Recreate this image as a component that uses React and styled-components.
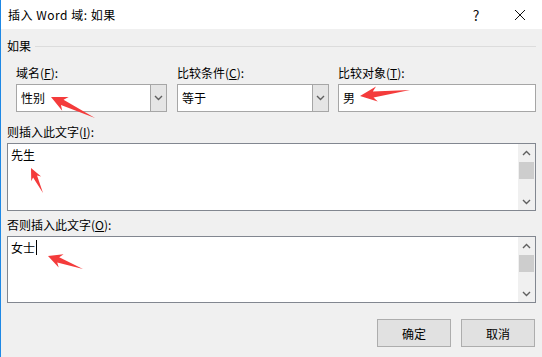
import styled, { createGlobalStyle } from "styled-components";

const GlobalStyle = createGlobalStyle`
  html, body {
    margin: 0;
    padding: 0;
    background: #f0f0f0;
  }
  body {
    font-family: "Noto Sans CJK SC", "Microsoft YaHei", sans-serif;
    font-size: 12px;
    color: #000;
  }
`;

const Window = styled.div`
  position: relative;
  width: 541px;
  height: 357px;
  border-left: 1px solid #1e88e5;
  background: #f0f0f0;
  display: flex;
  flex-direction: column;
  overflow: hidden;
`;

const TitleBar = styled.div`
  height: 29px;
  background: #fff;
  display: flex;
  align-items: center;
  padding-left: 7px;
`;

const Title = styled.div`
  flex: 1;
  font-size: 12px;
  line-height: 16px;
  letter-spacing: 0.5px;
`;

const TitleBtn = styled.div`
  width: 44px;
  height: 29px;
  display: flex;
  align-items: center;
  justify-content: center;
  font-size: 14px;
  color: #111;
`;

const Body = styled.div`
  flex: 1;
  display: flex;
  flex-direction: column;
  padding: 9px 6px 0 6px;
`;

const Section = styled.div`
  display: flex;
  align-items: center;
  line-height: 16px;
  gap: 4px;
`;

const Rule = styled.div`
  flex: 1;
  height: 1px;
  background: #dcdcdc;
`;

const FieldRow = styled.div`
  display: flex;
  padding-left: 9px;
  margin-top: 11px;
`;

const Field = styled.div`
  width: ${(p) => p.$w}px;
  margin-right: ${(p) => p.$gap || 0}px;
  display: flex;
  flex-direction: column;
  gap: 3px;
`;

const Label = styled.div`
  line-height: 16px;
  margin-top: ${(p) => p.$mt || 0}px;
  u {
    text-decoration: underline;
  }
`;

const Box = styled.div`
  height: 28px;
  box-sizing: border-box;
  border: 1px solid #a6a6a6;
  background: #fff;
  display: flex;
  align-items: center;
`;

const BoxText = styled.div`
  flex: 1;
  padding-left: 4px;
  line-height: 16px;
`;

const DropBtn = styled.div`
  width: 15px;
  align-self: stretch;
  background: #e5e5e5;
  border-left: 1px solid #a6a6a6;
  display: flex;
  align-items: center;
  justify-content: center;
`;

const Memo = styled.div`
  height: ${(p) => p.$h}px;
  box-sizing: border-box;
  border: 1px solid #828790;
  background: #fff;
  display: flex;
  margin-top: 3px;
`;

const MemoText = styled.div`
  flex: 1;
  padding: 3px 0 0 3px;
  line-height: 16px;
  display: flex;
  align-items: flex-start;
`;

const Caret = styled.span`
  display: inline-block;
  width: 1px;
  height: 15px;
  background: #000;
  margin-left: 1px;
`;

const Scroll = styled.div`
  width: 17px;
  background: #f0f0f0;
  display: flex;
  flex-direction: column;
`;

const ScrollBtn = styled.div`
  height: 17px;
  display: flex;
  align-items: center;
  justify-content: center;
`;

const Thumb = styled.div`
  height: 17px;
  margin: 1px 1px 0 1px;
  background: #cdcdcd;
`;

const Spacer = styled.div`
  flex: 1;
`;

const Buttons = styled.div`
  display: flex;
  justify-content: flex-end;
  gap: 10px;
  margin-top: 16px;
  padding-right: 1px;
`;

const Button = styled.div`
  width: 74px;
  height: 28px;
  box-sizing: border-box;
  background: #e1e1e1;
  border: 1px solid #adadad;
  display: flex;
  align-items: center;
  justify-content: center;
`;

const Overlay = styled.svg`
  position: absolute;
  left: 0;
  top: 0;
  pointer-events: none;
`;

const Chevron = ({ up }) => (
  <svg width="9" height="6" viewBox="0 0 9 6">
    <path
      d={up ? "M1 5 L4.5 1.5 L8 5" : "M1 1 L4.5 4.5 L8 1"}
      fill="none"
      stroke="#606060"
      strokeWidth="1.4"
    />
  </svg>
);

function arrow(tip, tail, head, hw, sw) {
  const dx = tail[0] - tip[0];
  const dy = tail[1] - tip[1];
  const len = Math.hypot(dx, dy);
  const ux = dx / len;
  const uy = dy / len;
  const nx = -uy;
  const ny = ux;
  const p = (a, b) => `${tip[0] + ux * a + nx * b},${tip[1] + uy * a + ny * b}`;
  return [
    `${tip[0]},${tip[1]}`,
    p(head, hw),
    p(head * 0.78, sw),
    `${tail[0]},${tail[1]}`,
    p(head * 0.78, -sw),
    p(head, -hw),
  ].join(" ");
}

const arrows = [
  { tip: [50, 97], tail: [94, 118], head: 16, hw: 7.5, sw: 3 },
  { tip: [359, 96], tail: [409, 90], head: 17, hw: 7.5, sw: 3 },
  { tip: [30, 168], tail: [42, 193], head: 12, hw: 5.5, sw: 2.2 },
  { tip: [47, 256], tail: [82, 269], head: 14, hw: 7, sw: 2.8 },
];

function ScrollBar() {
  return (
    <Scroll>
      <ScrollBtn>
        <Chevron up />
      </ScrollBtn>
      <Thumb />
      <Spacer />
      <ScrollBtn>
        <Chevron />
      </ScrollBtn>
    </Scroll>
  );
}

export default function App() {
  return (
    <>
      <GlobalStyle />
      <Window>
        <TitleBar>
          <Title>插入 Word 域: 如果</Title>
          <TitleBtn>?</TitleBtn>
          <TitleBtn>
            <svg width="12" height="12" viewBox="0 0 12 12">
              <path d="M1 1 L11 11 M11 1 L1 11" stroke="#111" strokeWidth="1" />
            </svg>
          </TitleBtn>
        </TitleBar>
        <Body>
          <Section>
            如果
            <Rule />
          </Section>
          <FieldRow>
            <Field $w={151} $gap={10}>
              <Label>
                域名(<u>F</u>):
              </Label>
              <Box>
                <BoxText>性别</BoxText>
                <DropBtn>
                  <Chevron />
                </DropBtn>
              </Box>
            </Field>
            <Field $w={152} $gap={9}>
              <Label>
                比较条件(<u>C</u>):
              </Label>
              <Box>
                <BoxText>等于</BoxText>
                <DropBtn>
                  <Chevron />
                </DropBtn>
              </Box>
            </Field>
            <Field $w={198}>
              <Label>
                比较对象(<u>T</u>):
              </Label>
              <Box>
                <BoxText>男</BoxText>
              </Box>
            </Field>
          </FieldRow>
          <Label $mt={12}>
            则插入此文字(<u>I</u>):
          </Label>
          <Memo $h={68}>
            <MemoText>先生</MemoText>
            <ScrollBar />
          </Memo>
          <Label $mt={6}>
            否则插入此文字(<u>O</u>):
          </Label>
          <Memo $h={67}>
            <MemoText>
              女士
              <Caret />
            </MemoText>
            <ScrollBar />
          </Memo>
          <Buttons>
            <Button>确定</Button>
            <Button>取消</Button>
          </Buttons>
        </Body>
        <Overlay width="542" height="357">
          {arrows.map((a, i) => (
            <polygon
              key={i}
              points={arrow(a.tip, a.tail, a.head, a.hw, a.sw)}
              fill="#f43b3b"
            />
          ))}
        </Overlay>
      </Window>
    </>
  );
}
